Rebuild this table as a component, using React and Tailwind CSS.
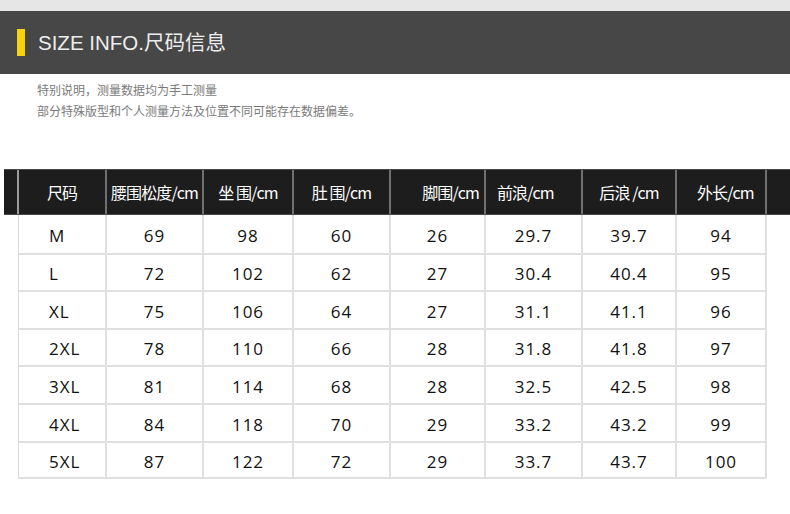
import React from "react";

const widths = [88, 97, 90, 97, 95, 97, 94, 90];
const headers = [
  { t: "尺码", c: "justify-center" },
  { t: "腰围松度/cm", c: "justify-center" },
  { t: "坐 围/cm", c: "justify-center" },
  { t: "肚 围/cm", c: "justify-center" },
  { t: "脚围/cm", c: "justify-end pr-[5px]" },
  { t: "前浪/cm", c: "justify-start pl-[11px]" },
  { t: "后浪 /cm", c: "justify-center" },
  { t: "外长/cm", c: "justify-start pl-[20px]" },
];
const rows = [
  ["M", "69", "98", "60", "26", "29.7", "39.7", "94"],
  ["L", "72", "102", "62", "27", "30.4", "40.4", "95"],
  ["XL", "75", "106", "64", "27", "31.1", "41.1", "96"],
  ["2XL", "78", "110", "66", "28", "31.8", "41.8", "97"],
  ["3XL", "81", "114", "68", "28", "32.5", "42.5", "98"],
  ["4XL", "84", "118", "70", "29", "33.2", "43.2", "99"],
  ["5XL", "87", "122", "72", "29", "33.7", "43.7", "100"],
];
const heights = [40, 37, 38, 37, 38, 38, 36];

export default function App() {
  return (
    <div className="w-[790px] h-[514px] bg-white overflow-hidden" style={{ fontFamily: '"Liberation Sans", "Noto Sans CJK SC", sans-serif' }}>
      <div className="h-[11px] bg-[#e6e6e6]" />
      <div className="h-[63px] bg-[#474747] flex items-center">
        <div className="ml-[17px] w-[8px] h-[27px] bg-[#f6d30b]" />
        <div className="ml-[13px] mt-[2px] text-[20.5px] text-[#ededed] leading-none">SIZE INFO.尺码信息</div>
      </div>
      <div className="pl-[37px] pt-[5px] text-[12px] leading-[21px] text-[#7a7a7a]" style={{ fontFamily: '"Noto Sans CJK SC", sans-serif' }}>
        <div>特别说明，测量数据均为手工测量</div>
        <div>部分特殊版型和个人测量方法及位置不同可能存在数据偏差。</div>
      </div>
      <div className="mt-[48px]">
        <div className="ml-[4px] flex h-[46px] bg-[#1d1d1d] border-y border-[#4a4a4a]" style={{ fontFamily: '"Noto Sans CJK SC", sans-serif' }}>
          <div className="w-[13px]" />
          <div className="w-[2px] bg-[#9a9a9a]" />
          {headers.map((h, i) => (
            <div key={i} className={`flex items-center text-white text-[16px] tracking-[-0.9px] border-r-2 border-[#707070] ${h.c}`} style={{ width: widths[i] }}>
              {h.t}
            </div>
          ))}
          <div className="w-[15px]" />
        </div>
        <div className="ml-[18px] border-l border-[#dcdcdc] w-[749px]" style={{ fontFamily: '"Open Sans", sans-serif' }}>
          {rows.map((r, ri) => (
            <div key={ri} className="flex border-b-2 border-[#e0e0e0]" style={{ height: heights[ri] }}>
              {r.map((v, ci) => (
                <div
                  key={ci}
                  className={`flex items-center pt-[3px] text-[17px] text-[#111] tracking-[1px] border-r-2 border-[#e0e0e0] ${ci === 0 ? "justify-start pl-[30px]" : "justify-center"}`}
                  style={{ width: widths[ci] }}
                >
                  {v}
                </div>
              ))}
            </div>
          ))}
        </div>
      </div>
    </div>
  );
}
